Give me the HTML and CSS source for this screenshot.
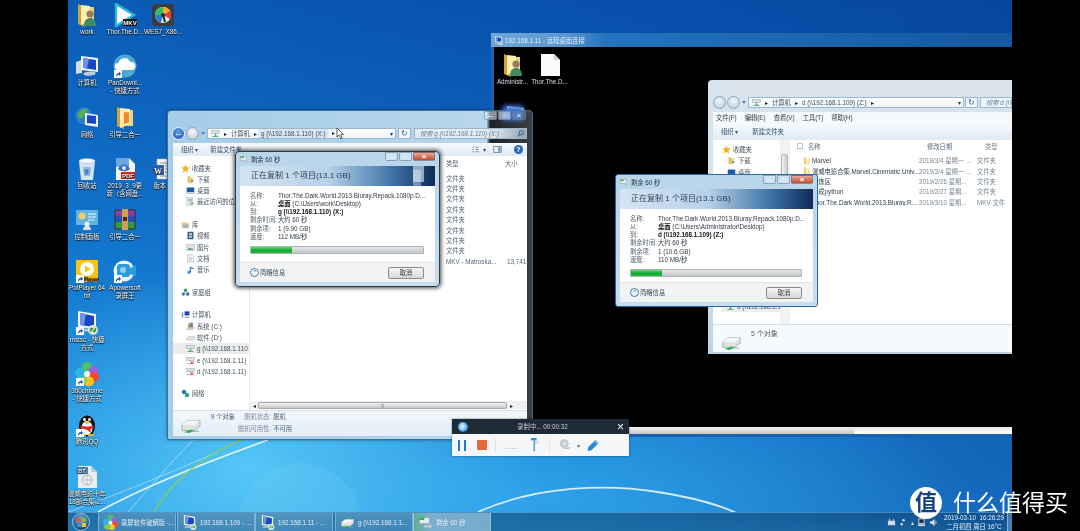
FILE: index.html
```html
<!DOCTYPE html>
<html lang="zh-CN">
<head>
<meta charset="utf-8">
<title>远程复制</title>
<link rel="stylesheet" href="styles.css">
</head>
<body>
<svg class="defs" width="0" height="0" aria-hidden="true">
  <symbol id="folder" viewBox="0 0 24 24"><path d="M4 1l7 3v19l-7-3z" fill="#d0a23a"/><path d="M10 4h10v16H10z" fill="#f0d27a"/><path d="M7 2l10 1v15L7 22z" fill="#fdeeb4"/></symbol>
  <symbol id="folder-orange" viewBox="0 0 24 24"><path d="M4 1l7 3v19l-7-3z" fill="#d0a23a"/><path d="M10 4h10v16H10z" fill="#f0d27a"/><path d="M7 2l10 1v15L7 22z" fill="#fdeeb4"/><path d="M11 6l5 .5v10l-5 1.500z" fill="#ee8a2c"/></symbol>
  <symbol id="folder-user" viewBox="0 0 24 24"><path d="M3 1l7 3v20l-7-3z" fill="#d0a23a"/><path d="M9 4h10v16H9z" fill="#f0d27a"/><path d="M6 2l9 1v15l-9 4z" fill="#fdeeb4"/><circle cx="15" cy="11" r="3.600" fill="#9a7a60"/><path d="M9 23c0-6 3-8 6-8s6 2 6 8z" fill="#3f8a63"/></symbol>
  <symbol id="wheel" viewBox="0 0 24 24"><rect x="1" y="1" width="22" height="22" rx="3" fill="#3c3c40"/><circle cx="12" cy="12" r="8" fill="#e8e8e8"/><path d="M12 12V4a8 8 0 0 1 7 4z" fill="#f5a623"/><path d="M12 12l7-4a8 8 0 0 1 0 8z" fill="#e23d3d"/><path d="M12 12L4 12a8 8 0 0 1 8-8z" fill="#2bbf6a"/><path d="M12 12H4a8 8 0 0 0 6 7.700z" fill="#2b7fd8"/><circle cx="12" cy="12" r="2" fill="#333"/><path d="M12 12l2 7" stroke="#222" stroke-width="2"/></symbol>
  <symbol id="pc" viewBox="0 0 24 24"><path d="M1 8l6-2v13l-6 1z" fill="#d7dde3"/><path d="M6 2l17 2v14L6 16z" fill="#eef3f7"/><path d="M8 4l13 2v10L8 14z" fill="#1947c4"/><path d="M8 4l6 1-2 9H8z" fill="#6e94e6"/><path d="M8 20c3-3 10-3 13-1-1 3-11 4-13 1z" fill="#c4cdd6"/></symbol>
  <symbol id="cloud" viewBox="0 0 24 24"><circle cx="12" cy="12" r="11.500" fill="#4ca8cf"/><path d="M5 16a3.500 3.500 0 0 1 .5-7A6 6 0 0 1 17 8a4 4 0 0 1 2.500 8z" fill="#fff"/></symbol>
  <symbol id="globe" viewBox="0 0 24 24"><circle cx="9" cy="10" r="8.500" fill="#2f7fd0"/><path d="M3 8c2-4 6-6 9-5 1 3-2 4-3 7-2 0-2 3-4 3-2-1-2-3-2-5z" fill="#55b24a"/><path d="M10 7l13 2v12l-13-2z" fill="#eef3f7"/><path d="M12 9l9 1v8l-9-1z" fill="#1947c4"/></symbol>
  <symbol id="bin" viewBox="0 0 24 24"><path d="M4 4h16l-2 19H6z" fill="#d5e3ee"/><ellipse cx="12" cy="4" rx="8" ry="2.500" fill="#f2f7fb" stroke="#9eb3c3" stroke-width=".6"/><path d="M8 10l8 0-1 9H9z" fill="#8db8db"/><path d="M9 13l4-1 1 4-3 2z" fill="#3f86c6"/></symbol>
  <symbol id="panel" viewBox="0 0 24 24"><rect x="1" y="2" width="22" height="15" rx="1" fill="#5fb6df"/><circle cx="7" cy="8" r="3.500" fill="#f2cf6a"/><path d="M13 6h8M13 9h8M13 12h6" stroke="#e8f6fd"/><path d="M8 22c0-6 8-6 8 0z" fill="#d9dfe4"/><circle cx="12" cy="16" r="2.500" fill="#eceff2"/></symbol>
  <symbol id="rar" viewBox="0 0 24 24"><rect x="2" y="2" width="20" height="6" fill="#8e3da8"/><rect x="2" y="8" width="20" height="6" fill="#2450b8"/><rect x="2" y="14" width="20" height="7" fill="#2f9a3f"/><path d="M2 2h20v19H2z" fill="none" stroke="#3a2a18"/><rect x="9" y="1" width="6" height="21" fill="#c9a15a"/><rect x="10" y="9" width="4" height="4" fill="#4a2a10"/></symbol>
  <symbol id="apower" viewBox="0 0 24 24"><circle cx="11" cy="12" r="10.500" fill="#eaf6fc"/><rect x="4" y="5" width="13" height="13" rx="3" fill="#2d9be0"/><path d="M17 9l6-3v12l-6-3z" fill="#2d9be0"/><circle cx="10" cy="11" r="3" fill="#8ed2f5"/></symbol>
  <symbol id="rdp" viewBox="0 0 24 24"><path d="M3 0l18 3v15L3 16z" fill="#eef3f7"/><path d="M5 2l14 3v11L5 14z" fill="#1947c4"/><path d="M5 2l6 1-2 11H5z" fill="#6e94e6"/><path d="M3 19c4-2 12-2 15 0-3 2-12 2-15 0z" fill="#b9c4ce"/><circle cx="18" cy="19" r="5" fill="#d9e8d2"/><path d="M15 19l2-2M21 19l-2 2M15 21l3-4M21 17l-3 4" stroke="#2e8a3a" stroke-width="1.100"/></symbol>
  <symbol id="pin" viewBox="0 0 24 24"><circle cx="12" cy="5" r="5" fill="#4cc26d"/><circle cx="18.500" cy="9" r="5" fill="#9b5fe0"/><circle cx="19" cy="15" r="5" fill="#ef4b2f"/><circle cx="14" cy="19.500" r="5" fill="#f7c51e"/><circle cx="7" cy="18" r="5" fill="#8ad04a"/><circle cx="5" cy="11" r="5" fill="#2fb4e8"/><circle cx="12" cy="12" r="3" fill="#fff"/></symbol>
  <symbol id="qq" viewBox="0 0 24 24"><ellipse cx="12" cy="13" rx="8" ry="10.500" fill="#111"/><ellipse cx="12" cy="15" rx="5.500" ry="7" fill="#fff"/><circle cx="9.500" cy="6.500" r="1.500" fill="#fff"/><circle cx="14.500" cy="6.500" r="1.500" fill="#fff"/><path d="M9 9h6l-3 2z" fill="#f2b21c"/><path d="M5.500 12c4 2 9 2 13 0v3l-3 1v4l-3-3-7-2z" fill="#e3281e"/><path d="M5 22h6M13 22h6" stroke="#f2b21c" stroke-width="2.200"/></symbol>
  <symbol id="doc" viewBox="0 0 24 24"><path d="M3 1h13l6 6v16H3z" fill="#fbfbfb"/><path d="M16 1v6h6z" fill="#d2d6da"/></symbol>
  <symbol id="sc" viewBox="0 0 8 8"><rect width="8" height="8" fill="#fff"/><path d="M2 7c0-3 1-4 3-4V1.500L7 4 5 6V4.500C4 4.500 3 5.500 2 7z" fill="#1856a8"/></symbol>
  <symbol id="star" viewBox="0 0 12 12"><path d="M6 .5l1.700 3.800 4 .4-3 2.700.9 4L6 9.300l-3.600 2.100.9-4-3-2.700 4-.4z" fill="#f4b22a"/></symbol>
  <symbol id="dl" viewBox="0 0 12 12"><path d="M2 1l5 1.500v9L2 10z" fill="#e6c15e"/><path d="M6 3h4v7H6z" fill="#f5dd8e"/><path d="M7 6v4l3-2z" fill="#2f7ed2"/></symbol>
  <symbol id="desk" viewBox="0 0 12 12"><rect x="1" y="2" width="10" height="8" fill="#1d5aa8"/><rect x="1" y="8" width="10" height="2" fill="#cfd8e0"/></symbol>
  <symbol id="recent" viewBox="0 0 12 12"><rect x="1" y="1" width="8" height="10" fill="#e0e6ea" stroke="#99a6b0" stroke-width=".5"/><path d="M3 3h5M3 5h5" stroke="#8b99a5"/><circle cx="8" cy="8.500" r="2.500" fill="#9ccb8c"/></symbol>
  <symbol id="lib" viewBox="0 0 12 12"><path d="M1 3h5l1 1h4v7H1z" fill="#e9c976"/><rect x="3" y="6" width="6" height="4" fill="#8bb7e2"/></symbol>
  <symbol id="video" viewBox="0 0 12 12"><rect x="2" y="1" width="8" height="10" fill="#3a5f86"/><rect x="4" y="3" width="4" height="2.500" fill="#b8d4ea"/><rect x="4" y="6.500" width="4" height="2.500" fill="#b8d4ea"/></symbol>
  <symbol id="pic" viewBox="0 0 12 12"><rect x="1" y="2" width="10" height="8" fill="#d8e4ec" stroke="#8fa0ad" stroke-width=".5"/><path d="M2 9l3-3 2 2 1-1 2 2z" fill="#3f8a4a"/></symbol>
  <symbol id="page" viewBox="0 0 12 12"><path d="M2 1h6l2 2v8H2z" fill="#f4f6f8" stroke="#8fa0ad" stroke-width=".6"/><path d="M4 5h4M4 7h4M4 9h3" stroke="#7d93a6" stroke-width=".6"/></symbol>
  <symbol id="music" viewBox="0 0 12 12"><path d="M5 9V2l5 2v1.500L6.500 4.500V9.500" fill="#2c7fd0"/><circle cx="4" cy="9.500" r="2" fill="#2c7fd0"/></symbol>
  <symbol id="home" viewBox="0 0 12 12"><circle cx="6" cy="3" r="2.200" fill="#38a169"/><circle cx="3" cy="8" r="2.200" fill="#2d7fd0"/><circle cx="9" cy="8" r="2.200" fill="#2d6cb0"/><path d="M3 8l3-5 3 5z" fill="none" stroke="#557" stroke-width=".5"/></symbol>
  <symbol id="pcs" viewBox="0 0 12 12"><rect x="1" y="3" width="2" height="7" fill="#8b98a4"/><rect x="4" y="1" width="8" height="7" fill="#cfd8e0"/><rect x="5" y="2" width="6" height="5" fill="#1947c4"/><rect x="5" y="9" width="6" height="1.500" fill="#8b98a4"/></symbol>
  <symbol id="drv-c" viewBox="0 0 12 12"><path d="M1 8l3-2h7v3l-2 2H1z" fill="#c9d0d6"/><rect x="3" y="1" width="3" height="3" fill="#f2b21c"/><rect x="6" y="1" width="3" height="3" fill="#2f7ed2"/><rect x="3" y="4" width="3" height="3" fill="#3fa34d"/><rect x="6" y="4" width="3" height="3" fill="#d9432f"/></symbol>
  <symbol id="drv" viewBox="0 0 12 12"><path d="M1 7l2-2h8v3l-1 1H1z" fill="#e9edf0" stroke="#7e8a94" stroke-width=".6"/></symbol>
  <symbol id="net" viewBox="0 0 12 12"><rect x="1" y="2" width="10" height="4" fill="#d9dfe4" stroke="#7e8a94" stroke-width=".5"/><path d="M6 6v2M2 10h8" stroke="#2e9a4a"/><path d="M4 9l2-2 2 2z" fill="#2ba84a"/></symbol>
  <symbol id="netx" viewBox="0 0 12 12"><rect x="1" y="2" width="10" height="4" fill="#d9dfe4" stroke="#7e8a94" stroke-width=".5"/><path d="M6 6v2M1 10h7" stroke="#9aa5ad"/><path d="M6 7l4 4M10 7l-4 4" stroke="#dc2a1e" stroke-width="1.300"/></symbol>
  <symbol id="network" viewBox="0 0 12 12"><circle cx="4" cy="4" r="3" fill="#2d7fd0"/><circle cx="8" cy="8" r="3" fill="#38a169"/></symbol>
  <symbol id="mini-drive" viewBox="0 0 24 20"><path d="M2 10l6-5h14v6l-6 5H2z" fill="#dfe4e7" stroke="#7f8a90" stroke-width=".7"/><path d="M8 5h14l-6 5H2z" fill="#f4f6f7"/><path d="M4 18l8-3 4 1-6 3z" fill="#2fb04c"/><path d="M13 17h8" stroke="#9ba7ad"/></symbol>
  <symbol id="copy" viewBox="0 0 12 12"><rect x="1" y="2" width="8" height="5" fill="#e6eaed" stroke="#8b98a4" stroke-width=".5"/><path d="M1 3h4" stroke="#38b24e" stroke-width="2"/><path d="M5 8h4V6.500l2.500 2.500L9 11.500V10H5z" fill="#c0c8ce"/></symbol>
</svg>

<div class="screen">
  <div class="desktop">
    <main class="wall">
      <svg class="streaks" viewBox="0 0 944 512" aria-hidden="true">
        <circle cx="232" cy="525" r="62" fill="#7fd2f5" opacity=".18"/>
        <path d="M30 512C70 490 130 465 200 440" stroke="#fff" stroke-width="1.600" fill="none" opacity=".85"/>
        <path d="M0 512C40 498 90 478 150 452" stroke="#dff5ff" stroke-width=".8" fill="none" opacity=".6"/>
        <path d="M60 512C80 490 100 465 125 440" stroke="#e6f7ff" stroke-width=".9" fill="none" opacity=".55"/>
        <path d="M86 512C105 480 130 460 172 440" stroke="#8ccf4a" stroke-width="1.200" fill="none"/>
        <path d="M410 512C470 485 540 484 590 492C640 500 670 510 700 531" stroke="#f2fbff" stroke-width="1.800" fill="none" opacity=".85"/>
      </svg>

      <section class="icons">
        <div class="ico"><svg class="big"><use href="#folder-user"/></svg><span>work</span></div>
        <div class="ico"><svg class="big" viewBox="0 0 24 24"><path d="M3 1l18 11L3 23z" fill="#fff" stroke="#27b7d8" stroke-width="2.400"/><rect x="10" y="16" width="14" height="7" fill="#1a1a1a"/><text x="17" y="22" font-size="6" font-weight="700" fill="#fff" text-anchor="middle" font-family="Liberation Sans">MKV</text></svg><span>Thor.The.D...</span></div>
        <div class="ico"><svg class="big"><use href="#wheel"/></svg><span>WES7_X86...</span></div>
        <div class="ico"><svg class="big"><use href="#pc"/></svg><span>计算机</span></div>
        <div class="ico sc"><svg class="big"><use href="#cloud"/></svg><svg class="badge"><use href="#sc"/></svg><span>PanDownl...<br>- 快捷方式</span></div>
        <div class="ico cell-empty"></div>
        <div class="ico"><svg class="big"><use href="#globe"/></svg><span>网络</span></div>
        <div class="ico"><svg class="big"><use href="#folder-orange"/></svg><span>引导二合一</span></div>
        <div class="ico cell-empty"></div>
        <div class="ico"><svg class="big"><use href="#bin"/></svg><span>回收站</span></div>
        <div class="ico"><svg class="big" viewBox="0 0 24 24"><path d="M3 1h13l6 6v16H3z" fill="#f6f6f6"/><path d="M3 1h13v9H3z" fill="#6ba6e0"/><path d="M5 12c3-6 9-6 12 0-3 3-9 3-12 0z" fill="#2f6fc0"/><circle cx="11" cy="11" r="2" fill="#d9e8f6"/><rect x="8" y="15" width="14" height="7" fill="#d62b20"/><text x="15" y="21" font-size="6" font-weight="700" fill="#fff" text-anchor="middle" font-family="Liberation Sans">PDF</text></svg><span>2019_3_9更<br>新（含网盘...</span></div>
        <div class="ico"><svg class="big" viewBox="0 0 24 24"><path d="M6 2h14v20H6z" fill="#f4f4f4" stroke="#b9b9b9" stroke-width=".6"/><path d="M9 6h8M14 9h4M14 12h4M14 15h4M9 19h8" stroke="#8b8b8b"/><rect x="1" y="8" width="12" height="10" fill="#2a5fb0"/><text x="7" y="16.500" font-size="8" font-weight="700" fill="#fff" text-anchor="middle" font-family="Liberation Serif">W</text></svg><span>版本分</span></div>
        <div class="ico"><svg class="big"><use href="#panel"/></svg><span>控制面板</span></div>
        <div class="ico"><svg class="big"><use href="#rar"/></svg><span>引导二合一</span></div>
        <div class="ico cell-empty"></div>
        <div class="ico sc"><svg class="big" viewBox="0 0 24 24"><rect x="1" y="1" width="22" height="22" rx="1" fill="#f6c515"/><circle cx="12" cy="10" r="7" fill="#fff"/><path d="M10 6.500l6 3.500-6 3.500z" fill="#f6c515"/><text x="16" y="21.500" font-size="5.500" fill="#4a3a00" text-anchor="middle" font-family="Liberation Sans">Player</text></svg><svg class="badge"><use href="#sc"/></svg><span>PotPlayer 64<br>bit</span></div>
        <div class="ico sc"><svg class="big"><use href="#apower"/></svg><svg class="badge"><use href="#sc"/></svg><span>Apowersoft<br>录屏王</span></div>
        <div class="ico cell-empty"></div>
        <div class="ico sc"><svg class="big"><use href="#rdp"/></svg><svg class="badge"><use href="#sc"/></svg><span>mstsc - 快捷<br>方式</span></div>
        <div class="ico cell-empty"></div><div class="ico cell-empty"></div>
        <div class="ico sc"><svg class="big"><use href="#pin"/></svg><svg class="badge"><use href="#sc"/></svg><span>360chrome<br>- 快捷方式</span></div>
        <div class="ico cell-empty"></div><div class="ico cell-empty"></div>
        <div class="ico sc"><svg class="big"><use href="#qq"/></svg><svg class="badge"><use href="#sc"/></svg><span>腾讯QQ</span></div>
        <div class="ico cell-empty"></div><div class="ico cell-empty"></div>
        <div class="ico"><svg class="big" viewBox="0 0 24 24"><path d="M3 1h13l6 6v16H3z" fill="#e9edf0"/><path d="M16 1v6h6z" fill="#c4ccd2"/><rect x="1" y="2" width="12" height="7" fill="#4a86c8"/><text x="7" y="8" font-size="5.500" font-weight="700" fill="#fff" text-anchor="middle" font-family="Liberation Sans">BT</text><circle cx="12" cy="15" r="5" fill="none" stroke="#aab7c1"/><path d="M7 15h10M12 10v10" stroke="#aab7c1" stroke-width=".7"/></svg><span>漫威电影十年<br>18部合集.2...</span></div>
      </section>

      <!-- remote desktop window -->
      <section class="rdp">
        <header class="rdp-title"><svg class="s9"><use href="#rdp"/></svg><span>192.168.1.11 - 远程桌面连接</span></header>
        <div class="rdp-body">
          <div class="rdp-icons">
            <div class="ico"><svg class="big"><use href="#folder-user"/></svg><span>Administr...</span></div>
            <div class="ico"><svg class="big"><use href="#doc"/></svg><span>Thor.The.D...</span></div>
            <div class="ico"><svg class="big"><use href="#pc"/></svg></div>
          </div>
          <div class="rdp-scroll"><i></i></div>
        </div>
      </section>

      <!-- remote explorer -->
      <section class="exp2">
        <div class="nav nav2">
          <i class="navbtn pale"></i><i class="navbtn pale"></i><i class="tri"></i>
          <div class="addr"><svg class="s9"><use href="#net"/></svg><b class="sep">▸</b><span>计算机</span><b class="sep">▸</b><span>d (\\192.168.1.109) (Z:)</span><b class="sep">▸</b><i class="grow"></i><b class="sep dn">▾</b></div>
          <div class="refresh">↻</div>
          <div class="search"><em>搜索 d (\\192</em></div>
        </div>
        <div class="menu"><span>文件(F)</span><span>编辑(E)</span><span>查看(V)</span><span>工具(T)</span><span>帮助(H)</span></div>
        <div class="tools tools2"><span>组织 ▾</span><span>新建文件夹</span></div>
        <div class="body2">
          <aside class="side2">
            <div class="r"><svg class="s9"><use href="#star"/></svg>收藏夹</div>
            <div class="r in"><svg class="s9"><use href="#dl"/></svg>下载</div>
            <div class="r in"><svg class="s9"><use href="#desk"/></svg>桌面</div>
            <div class="r in last"><svg class="s9"><use href="#net"/></svg>d (\\192.168.1.109)</div>
            <div class="vscroll"><i></i></div>
          </aside>
          <div class="list2">
            <div class="lrow head"><i class="check"></i><span class="n">名称</span><span class="d">修改日期</span><span class="t">类型</span></div>
            <div class="lrow"><svg class="s9"><use href="#folder"/></svg><span class="n">Marvel</span><span class="d">2019/3/4 星期一 ...</span><span class="t">文件夹</span></div>
            <div class="lrow"><svg class="s9"><use href="#folder"/></svg><span class="n">漫威电影合集.Marvel.Cinematic.Univ...</span><span class="d">2019/3/4 星期一 ...</span><span class="t">文件夹</span></div>
            <div class="lrow"><svg class="s9"><use href="#folder"/></svg><span class="n">试炼区</span><span class="d">2019/2/26 星期...</span><span class="t">文件夹</span></div>
            <div class="lrow"><svg class="s9"><use href="#folder"/></svg><span class="n">学成python</span><span class="d">2019/2/27 星期...</span><span class="t">文件夹</span></div>
            <div class="lrow"><svg class="s9"><use href="#doc"/></svg><span class="n">Thor.The.Dark.World.2013.Bluray.R...</span><span class="d">2019/3/10 星期...</span><span class="t">MKV 文件</span></div>
          </div>
        </div>
        <footer class="status status2"><svg class="drv-big"><use href="#mini-drive"/></svg><span>5 个对象</span></footer>
      </section>

      <!-- dialog over remote explorer -->
      <section class="dlg dlg-b">
        <header class="dlg-title"><svg class="s9"><use href="#copy"/></svg><span>剩余 60 秒</span><div class="caps"><i class="cap">–</i><i class="cap">▫</i><i class="cap close">×</i></div></header>
        <div class="dlg-inner">
          <h2 class="dlg-head">正在复制 1 个项目(13.1 GB)</h2>
          <div class="dlg-body">
            <dl class="info">
              <dt>名称:</dt><dd>Thor.The.Dark.World.2013.Bluray.Repack.1080p.D...</dd>
              <dt>从:</dt><dd><b>桌面</b> (C:\Users\Administrator\Desktop)</dd>
              <dt>到:</dt><dd><b>d (\\192.168.1.109) (Z:)</b></dd>
              <dt>剩余时间:</dt><dd>大约 60 秒</dd>
              <dt>剩余项:</dt><dd>1 (10.6 GB)</dd>
              <dt>速度:</dt><dd>110 MB/秒</dd>
            </dl>
            <div class="bar"><div class="fill" style="width:18.400%"></div></div>
          </div>
          <footer class="dlg-foot"><i class="chev">⌃</i><span>简略信息</span><button class="cancel" type="button">取消</button></footer>
        </div>
      </section>

      <!-- local explorer -->
      <section class="exp1">
        <i class="glass-spot"></i>
        <div class="nav nav1">
          <i class="navbtn back">←</i><i class="navbtn pale"></i><i class="tri"></i>
          <div class="addr"><svg class="s9"><use href="#net"/></svg><b class="sep">▸</b><span>计算机</span><b class="sep">▸</b><span class="crumb">g (\\192.168.1.110) (X:)</span><b class="sep box">▸</b><i class="grow"></i><b class="sep dn">▾</b></div>
          <div class="refresh">↻</div>
          <div class="search search1"><em>搜索 g (\\192.168.1.110) (X:)</em><svg class="s7" viewBox="0 0 10 10"><circle cx="6" cy="4" r="3" fill="none" stroke="#2a5f98" stroke-width="1.400"/><path d="M4 6L1 9" stroke="#2a5f98" stroke-width="1.600"/></svg></div>
        </div>
        <div class="tools tools1"><span>组织 ▾</span><span>新建文件夹</span><i class="grow"></i>
          <svg class="s9" viewBox="0 0 12 12"><path d="M2 3h2M2 6h2M2 9h2M6 3h4M6 6h4M6 9h4" stroke="#4c6a85"/></svg><span class="tiny">▾</span>
          <svg class="s9 pane" viewBox="0 0 12 12"><rect x="1" y="2" width="10" height="8" fill="#e6f0f8" stroke="#5a7c9a"/><rect x="7" y="3" width="3" height="6" fill="#4f94c8"/></svg>
          <i class="help">?</i>
        </div>
        <div class="body1">
          <aside class="side1">
            <div class="r"><svg class="s9"><use href="#star"/></svg>收藏夹</div>
            <div class="r in"><svg class="s9"><use href="#dl"/></svg>下载</div>
            <div class="r in"><svg class="s9"><use href="#desk"/></svg>桌面</div>
            <div class="r in"><svg class="s9"><use href="#recent"/></svg>最近访问的位置</div>
            <div class="r gap"><svg class="s9"><use href="#lib"/></svg>库</div>
            <div class="r in"><svg class="s9"><use href="#video"/></svg>视频</div>
            <div class="r in"><svg class="s9"><use href="#pic"/></svg>图片</div>
            <div class="r in"><svg class="s9"><use href="#page"/></svg>文档</div>
            <div class="r in"><svg class="s9"><use href="#music"/></svg>音乐</div>
            <div class="r gap"><svg class="s9"><use href="#home"/></svg>家庭组</div>
            <div class="r gap"><svg class="s9"><use href="#pcs"/></svg>计算机</div>
            <div class="r in"><svg class="s9"><use href="#drv-c"/></svg>系统 (C:)</div>
            <div class="r in"><svg class="s9"><use href="#drv"/></svg>软件 (D:)</div>
            <div class="r in sel"><svg class="s9"><use href="#net"/></svg>g (\\192.168.1.110</div>
            <div class="r in"><svg class="s9"><use href="#netx"/></svg>e (\\192.168.1.11)</div>
            <div class="r in"><svg class="s9"><use href="#netx"/></svg>d (\\192.168.1.11)</div>
            <div class="r gap"><svg class="s9"><use href="#network"/></svg>网络</div>
          </aside>
          <div class="main1">
            <div class="list1">
              <div class="cols head"><span>类型</span><span>大小</span></div>
              <div class="cols"><span>文件夹</span></div>
              <div class="cols"><span>文件夹</span></div>
              <div class="cols"><span>文件夹</span></div>
              <div class="cols"><span>文件夹</span></div>
              <div class="cols"><span>文件夹</span></div>
              <div class="cols"><span>文件夹</span></div>
              <div class="cols"><span>文件夹</span></div>
              <div class="cols"><span>文件夹</span></div>
              <div class="cols"><span>MKV - Matroska...</span><span>13,741,9</span></div>
            </div>
            <div class="hscroll"><b class="sep">◂</b><i class="thumb">⦙⦙⦙</i><b class="sep">▸</b></div>
          </div>
        </div>
        <footer class="status status1">
          <svg class="drv-big"><use href="#mini-drive"/></svg>
          <span class="count">9 个对象</span>
          <dl class="off"><dt>脱机状态:</dt><dd>脱机</dd><dt>脱机可用性:</dt><dd>不可用</dd></dl>
        </footer>
        <div class="win-caps"><i class="cap">–</i><i class="cap">▫</i><i class="cap dim">×</i></div>
      </section>

      <section class="dlg dlg-a">
        <header class="dlg-title"><svg class="s9"><use href="#copy"/></svg><span>剩余 60 秒</span><div class="caps"><i class="cap">–</i><i class="cap">▫</i><i class="cap close">×</i></div></header>
        <div class="dlg-inner">
          <h2 class="dlg-head">正在复制 1 个项目(13.1 GB)<i class="pane1"></i><i class="pane2"></i></h2>
          <div class="dlg-body">
            <dl class="info">
              <dt>名称:</dt><dd>Thor.The.Dark.World.2013.Bluray.Repack.1080p.D...</dd>
              <dt>从:</dt><dd><b>桌面</b> (C:\Users\work\Desktop)</dd>
              <dt>到:</dt><dd><b>g (\\192.168.1.110) (X:)</b></dd>
              <dt>剩余时间:</dt><dd>大约 60 秒</dd>
              <dt>剩余项:</dt><dd>1 (9.90 GB)</dd>
              <dt>速度:</dt><dd>112 MB/秒</dd>
            </dl>
            <div class="bar"><div class="fill" style="width:24%"></div></div>
          </div>
          <footer class="dlg-foot"><i class="chev">⌃</i><span>简略信息</span><button class="cancel" type="button">取消</button></footer>
        </div>
      </section>

      <svg class="cursor" viewBox="0 0 8 12" aria-hidden="true"><path d="M1 1v9l2.200-2 1.500 3.500 1.500-.7L4.800 7.500H7.500z" fill="#fff" stroke="#222" stroke-width=".7"/></svg>

      <!-- screen recorder -->
      <section class="rec">
        <header class="rec-top"><i class="rec-logo"></i><span>录制中... 00:00:32</span><b>×</b></header>
        <div class="rec-tools">
          <i class="pause"></i><i class="stop"></i><i class="divider"></i>
          <span class="dots">......</span>
          <svg class="rec-ic" viewBox="0 0 14 18"><rect x="2" y="0" width="7" height="3" fill="#2f86c8"/><path d="M5 3h2l0 14H5z" fill="#58a3d8"/><path d="M7 3l6 1-6 5z" fill="#c7dbe9"/></svg>
          <i class="divider"></i>
          <svg class="rec-ic" viewBox="0 0 18 18"><circle cx="8" cy="7" r="6" fill="#d6dadd" stroke="#a5abb0"/><circle cx="8" cy="7" r="2.500" fill="#f4f6f8" stroke="#a5abb0"/><path d="M3 15h12l2-3-6 1z" fill="#c0c5c9"/></svg>
          <span class="caret">▾</span>
          <svg class="rec-ic pen" viewBox="0 0 18 18"><path d="M2 16l1-5L12 2l4 4-9 9z" fill="#2a87d8"/><path d="M11 3l4 4" stroke="#fff" stroke-width=".8"/></svg>
        </div>
      </section>
    </main>

    <nav class="taskbar">
      <div class="orb"><i class="q1"></i><i class="q2"></i><i class="q3"></i><i class="q4"></i></div>
      <div class="tb"><svg class="s15"><use href="#pin"/></svg><span>录屏软件破解版 -...</span></div>
      <div class="tb tb-next"><svg class="s15"><use href="#rdp"/></svg><span>192.168.1.109 - ...</span></div>
      <div class="tb"><svg class="s15"><use href="#rdp"/></svg><span>192.168.1.11 - ...</span></div>
      <div class="tb tb-gap"><svg class="s15"><use href="#mini-drive"/></svg><span>g (\\192.168.1.1...</span></div>
      <div class="tb lit"><svg class="s15"><use href="#copy"/></svg><span>剩余 60 秒</span></div>
      <i class="grow"></i>
      <div class="tray">
        <svg class="tr" viewBox="0 0 10 10"><rect x="1" y="3" width="8" height="5" fill="#d5dade"/><path d="M3 1v2M7 1v2" stroke="#d5dade"/></svg>
        <svg class="tr" viewBox="0 0 10 10"><circle cx="5" cy="2.500" r="1.400" fill="#d5dade"/><circle cx="3" cy="7" r="1.400" fill="#d5dade"/></svg>
        <span class="tri-up">▴</span>
        <svg class="tr" viewBox="0 0 10 10"><rect x="2" y="1" width="6" height="5" fill="#1a2f4a" stroke="#d5dade"/><rect x="1" y="7" width="8" height="2" fill="#d5dade"/></svg>
        <svg class="tr" viewBox="0 0 10 10"><path d="M1 4h2l3-3v8L3 6H1z" fill="#e6ebef"/><path d="M7 3c1 1 1 3 0 4" stroke="#e6ebef" fill="none"/></svg>
      </div>
      <div class="clock"><span>2019-03-10 &nbsp;16:26:29</span><span>二月初四 周日 16°C</span></div>
      <i class="show"></i>
    </nav>
  </div>
  <div class="mark"><i class="mark-logo">值</i><span>什么值得买</span></div>
</div>
</body>
</html>
```

FILE: styles.css
```css
* { box-sizing: border-box; }
html, body { margin: 0; height: 100%; background: #000; overflow: hidden; }
body { font-family: "Liberation Sans", "Noto Sans CJK SC", sans-serif; font-size: 6.3px; color: #3a4a58; }
i { font-style: normal; display: block; }
.defs { position: absolute; }

.screen { position: relative; width: 1080px; height: 531px; padding: 0 68px; overflow: hidden; background: #000; filter: blur(.45px); }

.desktop {
  width: 944px; height: 531px; display: flex; flex-direction: column; overflow: hidden;
  background:
    radial-gradient(ellipse 300px 210px at 180px 470px, rgba(90,205,250,.9), rgba(90,205,250,0)),
    radial-gradient(ellipse 420px 150px at 480px 500px, rgba(50,170,240,.8), rgba(50,170,240,0)),
    linear-gradient(90deg, rgba(20,120,210,.25), rgba(5,60,150,.55) 100%),
    linear-gradient(180deg, #0852ac 0%, #0e6cc6 35%, #1e94e2 80%, #2aa2ea 100%);
}
.wall { flex: 1; position: relative; min-height: 0; }
.streaks { position: absolute; left: 0; top: 0; width: 944px; height: 512px; }

/* desktop icons */
.icons { position: absolute; left: 0; top: 3px; display: grid; grid-template-columns: repeat(3, 38px); grid-auto-rows: 51.3px; }
.ico { position: relative; display: flex; flex-direction: column; align-items: center; color: #fff; text-align: center; line-height: 8px; font-size: 6.3px; white-space: nowrap; text-shadow: 0 0 1.500px #000, 0 1px 1px #000; }
.ico span { margin-top: 1px; }
.big { width: 24px; height: 24px; display: block; }
.badge { position: absolute; left: 8px; top: 16px; width: 8px; height: 8px; }

.s7 { width: 7px; height: 7px; flex: none; }
.s9 { width: 9px; height: 9px; flex: none; }
.s15 { width: 15px; height: 15px; flex: none; }
.grow { flex: 1; }

/* remote desktop */
.rdp { position: absolute; left: 423px; top: 33px; width: 521px; height: 404px; display: flex; flex-direction: column; background: #1a62b0; padding: 0 0 3px 3px; }
.rdp-title { height: 14px; margin-left: -3px; padding-left: 3px; display: flex; align-items: center; gap: 2px; color: #e4edf5; background: linear-gradient(90deg, #6fa8d8 0, #5b98d0 14%, #2572be 22%, #14589f 100%); }
.rdp-body { flex: 1; background: #000; position: relative; display: flex; flex-direction: column; min-height: 0; }
.rdp-icons { flex: 1; display: grid; grid-template-columns: 37px 37px; grid-auto-rows: 51px; padding: 6px 0 0 0; }
.rdp-icons .ico { color: #dde; text-shadow: none; }
.rdp-icons .ico:nth-child(3) { grid-column: 1; }
.rdp-scroll { height: 7px; background: linear-gradient(#e8e8e8, #fff); }
.rdp-scroll i { width: 226px; height: 7px; margin-left: 134px; background: linear-gradient(#f4f4f4, #c6c6c6); }

/* shared explorer parts */
.nav { display: flex; align-items: center; }
.navbtn { width: 13px; height: 13px; border-radius: 50%; flex: none; }
.navbtn.pale { background: radial-gradient(circle at 50% 35%, #f1f6fa, #b6c8d8); border: 1px solid #8fa7ba; }
.navbtn.back { background: radial-gradient(circle at 50% 30%, #5d9bdc, #1658ac); border: 1px solid #e6f0f8; color: #fff; font-size: 9px; line-height: 10px; text-align: center; font-weight: 700; }
.tri { width: 0; height: 0; margin: 0 1px; border: 2px solid transparent; border-top: 3px solid #5f8098; border-bottom: 0; }
.addr { display: flex; align-items: center; gap: 4px; padding-left: 3px; height: 11px; background: linear-gradient(#fff, #eef5fb); border: 1px solid #9db7cc; color: #3c4c5c; white-space: nowrap; }
.sep { font-weight: 400; font-size: 6px; color: #222; }
.sep.dn { color: #333; padding-right: 2px; }
.refresh { width: 13px; height: 11px; margin-left: 1px; background: #f1f7fc; border: 1px solid #9db7cc; text-align: center; font-size: 8px; line-height: 9px; color: #2a6cb0; }
.search { margin-left: 2px; height: 11px; flex: 1; padding: 0 2px 0 5px; display: flex; align-items: center; justify-content: space-between; background: rgba(240,247,252,.9); border: 1px solid #9db7cc; color: #6a7d8c; overflow: hidden; white-space: nowrap; }
.tools { display: flex; align-items: center; color: #33506c; background: linear-gradient(#f6fafd, #dfeaf4); }
.r { display: flex; align-items: center; gap: 2px; height: 11.3px; white-space: nowrap; color: #44525e; }
.r.in { padding-left: 5px; }
.r.gap { margin-top: 11.3px; }
.head { color: #586a7a; }
.status { display: flex; background: linear-gradient(#f1f7fc, #e3eef7); border-top: 1px solid #d0dfea; color: #4a5f70; }
.drv-big { width: 22px; height: 18px; flex: none; }

/* local explorer */
.exp1 { position: absolute; left: 99px; top: 110px; width: 366px; height: 330px; padding: 16px 5px 3px; display: flex; flex-direction: column; border: 1px solid #3d6f95; border-radius: 4px 4px 2px 2px; box-shadow: 0 0 3px rgba(0,0,0,.5); background: linear-gradient(90deg, #a4cce8 0, #b8d6ec 87.500%, #1f2326 88.500%, #3b3e42 100%); }
.glass-spot { position: absolute; left: 334px; top: -6px; width: 22px; height: 16px; border-radius: 4px; background: #3f78d8; filter: blur(2px); opacity: .85; }
.nav1 { height: 12px; gap: 1px; flex: none; margin-left: -1px; }
.nav1 .addr { width: 189px; margin-left: 0; }
.nav1 .crumb { padding: 0 3px; margin-left: -3px; background: #d9e7f2; align-self: stretch; line-height: 9px; }
.nav1 .box { background: #eef4f9; padding: 0 2px; align-self: stretch; line-height: 9px; margin-left: -3px; border-right: 1px solid #a9c0d2; }
.search1 { background: linear-gradient(90deg, rgba(226,238,247,.95) 72%, rgba(170,180,190,.85)); }
.tools1 { height: 13px; margin-top: 4px; flex: none; padding: 0 4px 0 8px; gap: 12px; }
.tools1 .tiny { font-size: 6px; margin-left: -9px; }
.tools1 .pane { margin-left: -5px; }
.help { width: 9px; height: 9px; border-radius: 50%; background: #2469b6; color: #fff; font-weight: 700; text-align: center; line-height: 9px; font-size: 7px; }
.body1 { flex: 1; display: flex; background: #fff; min-height: 0; }
.side1 { width: 77px; flex: none; padding: 6.400px 0 0 8px; border-right: 1px solid #e4ecf2; overflow: hidden; }
.side1 .sel { margin-left: -8px; padding-left: 13px; background: #ececec; }
.main1 { flex: 1; min-width: 0; display: flex; flex-direction: column; }
.list1 { flex: 1; padding-left: 196px; overflow: hidden; white-space: nowrap; }
.cols { display: flex; height: 10.350px; line-height: 10.350px; color: #566675; }
.cols span:first-child { width: 61px; flex: none; }
.cols.head { height: 17.800px; line-height: 16px; }
.cols.head span:first-child { width: 59px; }
.hscroll { height: 8px; display: flex; align-items: center; margin-bottom: 1px; background: #f0f0f0; }
.hscroll .sep { width: 8px; text-align: center; }
.thumb { width: 249px; height: 7px; text-align: center; line-height: 7px; font-size: 5px; color: #666; background: linear-gradient(#f2f2f2, #c7c7c7); border: 1px solid #a8a8a8; border-radius: 2px; }
.status1 { height: 26px; flex: none; padding: 2px 0 0 7px; position: relative; }
.status1 .drv-big { margin-top: 3px; }
.count { margin: 0 0 0 9px; line-height: 8px; }
.off { margin: 0 0 0 2px; display: grid; grid-template-columns: 34px auto; column-gap: 2px; row-gap: 1px; line-height: 8px; white-space: nowrap; }
.off dt { text-align: right; color: #7a8a98; }
.off dd { margin: 0; }
.win-caps { position: absolute; right: 6px; top: 0; display: flex; gap: 1px; }
.cap { width: 13px; height: 9px; border-radius: 0 0 2px 2px; background: rgba(225,238,248,.55); border: 1px solid rgba(90,120,150,.6); color: #fff; text-align: center; line-height: 7px; font-size: 8px; }
.cap.dim { width: 14px; background: rgba(150,170,190,.3); }
.cap.close { width: 22px; background: linear-gradient(#e9a696, #c04a2c); font-weight: 700; }

/* remote explorer */
.exp2 { position: absolute; left: 640px; top: 80px; width: 304px; height: 274px; padding: 17px 0 2px 5px; display: flex; flex-direction: column; border-radius: 4px 0 0 0; background: linear-gradient(#d8e3ec, #d4e2ee 60%, #bdd4e6); }
.nav2 { height: 10px; flex: none; }
.nav2 .addr { width: 216px; margin-left: 1px; }
.nav2 .navbtn { margin-right: 1px; }
.menu { height: 11px; margin-top: 5px; flex: none; padding-left: 3px; display: flex; gap: 8px; align-items: center; background: #f5f9fc; color: #2f3d49; }
.tools2 { height: 17px; flex: none; padding-left: 8px; gap: 14px; }
.body2 { flex: 1; min-height: 0; display: flex; background: #fff; }
.side2 { width: 77px; flex: none; position: relative; padding: 4px 0 0 9px; overflow: hidden; border-right: 1px solid #eef2f5; }
.side2 .last { position: absolute; left: 8px; bottom: 12px; background: #eceff1; }
.vscroll { position: absolute; right: 0; top: 0; bottom: 0; width: 9px; background: #f2f2f2; }
.vscroll i { margin: 14px 1px 0; height: 120px; background: linear-gradient(90deg, #f4f4f4, #cbcbcb); border: 1px solid #b5b5b5; border-radius: 2px; }
.list2 { flex: 1; min-width: 0; padding: 1px 0 0 6px; overflow: hidden; white-space: nowrap; }
.lrow { display: flex; align-items: center; height: 10.300px; color: #2f3d49; }
.lrow.head { height: 10.300px; margin-bottom: 4.500px; color: #586a7a; }
.lrow .s9 { width: 8px; height: 8px; margin-left: 7px; }
.check { width: 6px; height: 6px; flex: none; border: 1px solid #b9c2c9; margin-left: 1px; }
.lrow.head .n { margin-left: 5px; width: 119px; }
.lrow .n { width: 107px; margin-left: 1px; overflow: hidden; }
.lrow .d { width: 58px; color: #7a8794; flex: none; }
.lrow .t { color: #7a8794; }
.lrow.head .d { color: #586a7a; }
.status2 { height: 28px; flex: none; padding: 3px 0 0 8px; gap: 9px; background: #f6fafd; font-size: 7px; }
.status2 .drv-big { width: 21px; margin-top: 5px; }

/* copy dialogs */
.dlg { position: absolute; display: flex; flex-direction: column; padding: 0 4px 4px; background: linear-gradient(#b9d5ea, #c7deef); }
.dlg-a { left: 167px; top: 151px; width: 205px; height: 136px; border: 1px solid #2e3a44; border-radius: 4px; box-shadow: 0 0 4px 1px rgba(0,0,0,.75); }
.dlg-b { left: 547px; top: 174px; width: 203px; height: 133px; border: 1px solid #2a6aa8; border-radius: 3px; }
.dlg-title { height: 14px; flex: none; display: flex; align-items: center; gap: 2px; color: #24384a; position: relative; }
.caps { position: absolute; right: 0; top: 0; display: flex; gap: 1px; }
.dlg-inner { flex: 1; display: flex; flex-direction: column; background: #fff; min-height: 0; }
.dlg-head { position: relative; height: 20px; flex: none; margin: 0; padding-left: 11px; font-size: 8px; font-weight: 400; line-height: 20px; color: #1f3a58; white-space: nowrap; background: linear-gradient(90deg, #d5e4f2 0, #b8d1e8 45%, #3f74a8 78%, #0f2c56 100%); }
.pane1 { position: absolute; right: 14px; top: 4px; width: 8px; height: 16px; background: rgba(190,215,240,.5); }
.pane2 { position: absolute; right: 11px; top: 0; width: 11px; height: 16px; background: rgba(225,238,250,.6); }
.dlg-body { flex: 1; padding: 5.500px 11px 0 10px; }
.info { margin: 0; display: grid; grid-template-columns: 28px 1fr; line-height: 8.300px; white-space: nowrap; color: #2f3a44; }
.info dt { color: #55626e; }
.info dd { margin: 0; }
.info dd b { color: #111; }
.bar { height: 7.500px; margin-top: 5px; background: linear-gradient(#e4e6e8, #c3c7ca); border: 1px solid #aeb3b6; border-radius: 1px; }
.fill { height: 100%; background: linear-gradient(#68d878, #0ea82e 55%, #24bb44); }
.dlg-foot { height: 20px; flex: none; display: flex; align-items: center; padding: 0 11px 0 10px; background: #f2f3f4; border-top: 1px solid #e2e4e6; color: #3b4854; }
.chev { width: 9px; height: 9px; border-radius: 50%; margin-right: 1px; background: #f2f7fb; border: 1px solid #3d7cb6; color: #2a5f98; text-align: center; font-size: 7px; line-height: 8px; }
.cancel { margin-left: auto; width: 36px; height: 12px; padding: 0; font: inherit; color: #333; background: linear-gradient(#f5f5f5, #d8d8d8); border: 1px solid #8a8a8a; border-radius: 2px; }

.cursor { position: absolute; left: 268px; top: 127px; width: 8px; height: 12px; }

/* recorder */
.rec { position: absolute; left: 384px; top: 419px; width: 177px; height: 37px; display: flex; flex-direction: column; box-shadow: 0 0 2px rgba(0,0,0,.5); }
.rec-top { height: 15px; flex: none; padding: 0 5px 0 6px; display: flex; align-items: center; justify-content: space-between; background: #1e2a36; color: #c6ccd2; }
.rec-top b { color: #fff; font-size: 12px; font-weight: 400; line-height: 12px; }
.rec-logo { width: 10px; height: 10px; border-radius: 50%; background: radial-gradient(circle at 45% 45%, #bfe6fb 20%, #2b8ed8 70%); }
.rec-tools { flex: 1; display: flex; align-items: center; padding-left: 6px; background: #f4f6f8; }
.pause { width: 8px; height: 11px; border-left: 2.500px solid #2478c9; border-right: 2.500px solid #2478c9; }
.stop { width: 10px; height: 10px; margin-left: 11px; border-radius: 1px; background: #e2683a; }
.divider { width: 1px; height: 15px; margin: 0 9px 0 8px; background: #e2e5e8; }
.dots { width: 16px; color: #5b94c8; letter-spacing: .5px; padding-top: 2px; margin-right: 8px; }
.rec-ic { width: 12px; height: 14px; flex: none; }
.rec-ic.pen { width: 14px; height: 15px; }
.caret { font-size: 6px; color: #667; margin: 0 6px; }

/* taskbar */
.taskbar { height: 19px; flex: none; display: flex; align-items: stretch; position: relative; padding-left: 3px; background: linear-gradient(rgba(10,60,110,.55), rgba(20,80,130,.6)); border-top: 1px solid rgba(160,210,240,.35); color: #dfeaf2; }
.orb { width: 18px; height: 18px; margin: 0 8px 0 1px; flex: none; border-radius: 50%; display: grid; grid-template-columns: 4px 4px; grid-template-rows: 4px 4px; gap: 1px; place-content: center; background: radial-gradient(circle at 50% 35%, #7bb5dc, #1a4d7a 75%); border: 1px solid #9cc4de; }
.q1 { background: #e2583a; } .q2 { background: #7cb84a; } .q3 { background: #3f8bd8; } .q4 { background: #f2c12e; }
.tb { width: 78px; flex: none; display: flex; align-items: center; gap: 3px; padding-left: 4px; white-space: nowrap; overflow: hidden; background: linear-gradient(rgba(170,210,235,.32), rgba(150,195,225,.22)); border: 1px solid rgba(190,225,245,.45); border-width: 0 1px 0 1px; }
.tb-next { margin-left: 1px; }
.tb-gap { margin-left: 2px; }
.lit { background: linear-gradient(90deg, rgba(150,220,130,.55), rgba(180,215,230,.6) 20%, rgba(190,220,235,.55)); }
.tray { display: flex; align-items: center; gap: 3px; margin-right: 5px; color: #dfe6ea; font-size: 6px; }
.tr { width: 9px; height: 9px; }
.clock { display: flex; flex-direction: column; justify-content: center; line-height: 9px; width: 62px; text-align: center; white-space: nowrap; color: #e8eff4; }
.show { width: 5px; margin-left: 2px; background: rgba(190,220,240,.3); border-left: 1px solid rgba(200,230,250,.5); }

/* watermark */
.mark { position: absolute; left: 910px; top: 487px; display: flex; align-items: center; gap: 11px; color: #fff; font-size: 23px; line-height: 32px; white-space: nowrap; }
.mark-logo { width: 32px; height: 32px; border-radius: 50%; background: #fff; color: #15407f; font-size: 22px; text-align: center; line-height: 31px; font-weight: 700; }
```
